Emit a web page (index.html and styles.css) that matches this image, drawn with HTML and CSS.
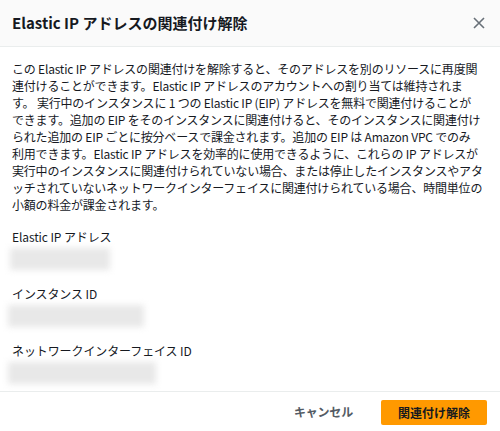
FILE: index.html
```html
<!DOCTYPE html>
<html lang="ja">
<head>
<meta charset="utf-8">
<title>Elastic IP アドレスの関連付け解除</title>
<link rel="stylesheet" href="styles.css">
</head>
<body>
<div class="modal">
  <header class="modal-header">
    <h2 class="modal-title">Elastic IP アドレスの関連付け解除</h2>
    <button class="close" aria-label="閉じる">
      <svg width="12" height="12" viewBox="0 0 12 12"><path d="M1 1 L11 11 M11 1 L1 11" stroke="#687078" stroke-width="1.6" fill="none"/></svg>
    </button>
  </header>
  <div class="modal-body">
    <p class="desc">この Elastic IP アドレスの関連付けを解除すると、そのアドレスを別のリソースに再度関<br>連付けることができます。Elastic IP アドレスのアカウントへの割り当ては維持されま<br>す。 実行中のインスタンスに 1 つの Elastic IP (EIP) アドレスを無料で関連付けることが<br>できます。追加の EIP をそのインスタンスに関連付けると、そのインスタンスに関連付け<br>られた追加の EIP ごとに按分ベースで課金されます。追加の EIP は Amazon VPC でのみ<br>利用できます。Elastic IP アドレスを効率的に使用できるように、これらの IP アドレスが<br>実行中のインスタンスに関連付けられていない場合、または停止したインスタンスやアタ<br>ッチされていないネットワークインターフェイスに関連付けられている場合、時間単位の<br>小額の料金が課金されます。</p>
    <div class="field">
      <div class="label">Elastic IP アドレス</div>
      <div class="value"><span class="redacted r1"></span></div>
    </div>
    <div class="field">
      <div class="label">インスタンス ID</div>
      <div class="value"><span class="redacted r2"></span></div>
    </div>
    <div class="field">
      <div class="label">ネットワークインターフェイス ID</div>
      <div class="value"><span class="redacted r3"></span></div>
    </div>
  </div>
  <footer class="modal-footer">
    <button class="btn btn-link">キャンセル</button>
    <button class="btn btn-primary">関連付け解除</button>
  </footer>
</div>
</body>
</html>
```
FILE: styles.css
```css
* { box-sizing: border-box; }

html, body {
  margin: 0;
  height: 100%;
}

body {
  font-family: "Noto Sans CJK JP", "Noto Sans", sans-serif;
  color: #16191f;
  background: #ffffff;
}

.modal {
  height: 100vh;
  display: flex;
  flex-direction: column;
  overflow: hidden;
}

.modal-header {
  height: 47px;
  flex: none;
  display: flex;
  align-items: center;
  justify-content: space-between;
  padding: 0 15px 0 12px;
  background: #fafafa;
  border-bottom: 1px solid #eaeded;
}

.modal-title {
  margin: 0;
  font-size: 15px;
  font-weight: 700;
  line-height: 20px;
  color: #16191f;
}

.close {
  border: 0;
  background: none;
  padding: 0;
  width: 12px;
  height: 12px;
  display: flex;
}

.modal-body {
  flex: 1;
  min-height: 0;
  padding: 13px 12px 0 12px;
}

.desc {
  margin: 0 0 15px 0;
  font-size: 12px;
  line-height: 17px;
  white-space: nowrap;
  letter-spacing: -0.2px;
}

.field {
  margin-bottom: 15px;
}

.label {
  font-size: 12px;
  line-height: 17px;
  margin-bottom: 3px;
  letter-spacing: -0.1px;
}

.value {
  height: 22px;
  margin-left: -4px;
}

.redacted {
  display: block;
  height: 22px;
  background: #e8e8e8;
  filter: blur(3px);
}

.r1 { width: 100px; margin-left: 2px; }
.r2 { width: 136px; }
.r3 { width: 148px; }

.modal-footer {
  flex: none;
  height: 40px;
  border-top: 1px solid #eaeded;
  display: flex;
  align-items: center;
  justify-content: flex-end;
  padding: 0 13px 0 0;
  gap: 12px;
}

.btn {
  font-family: inherit;
  font-size: 12px;
  font-weight: 700;
  line-height: 17px;
  border: 0;
  cursor: pointer;
}

.btn-link {
  background: none;
  color: #545b64;
  padding: 4px 16px;
  letter-spacing: -0.2px;
}

.btn-primary {
  background: #ff9900;
  color: #16191f;
  border-radius: 2px;
  height: 25px;
  padding: 0 17px;
  margin-top: 1px;
}
```
